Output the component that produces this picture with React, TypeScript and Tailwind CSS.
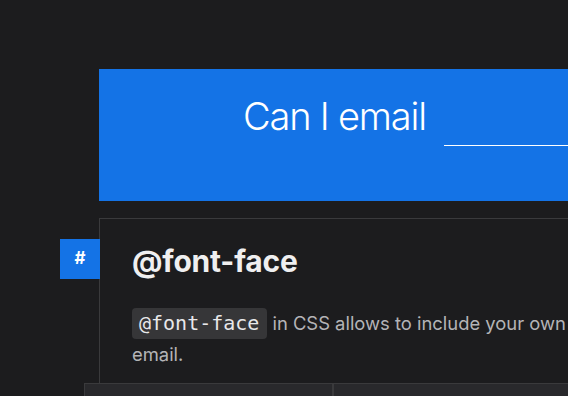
import React from "react";

export default function App() {
  return (
    <div
      className="w-[568px] h-[396px] overflow-hidden bg-[#1c1c1e]"
      style={{ fontFamily: "Inter, 'Noto Sans', sans-serif" }}
    >
      <div className="pt-[69px] pl-[99px]">
        {/* Banner */}
        <div className="w-[900px] h-[132px] bg-[#1473e6] flex items-start pl-[144px] pt-[23px]">
          <h1 className="text-white text-[38px] font-light leading-[48px] tracking-[-1.2px] whitespace-nowrap">
            Can I email
          </h1>
          <div className="ml-[18px] w-[400px] h-[54px] border-b border-white" />
        </div>
      </div>

      {/* Card */}
      <div className="relative ml-[99px] mt-[17px] w-[900px] border-l border-t border-[#3a3a3c]">
        <a className="absolute -left-[40px] top-[20px] w-[40px] h-[40px] bg-[#1473e6] flex items-center justify-center text-white text-[17px] font-bold">
          #
        </a>
        <div className="pl-[32px] pt-[22px]">
          <h2 className="text-[30px] font-bold leading-[40px] text-[#efeff0] tracking-[-0.2px]">
            @font-face
          </h2>
          <p className="mt-[27px] text-[18.4px] leading-[30px] text-[#b4b4b7] whitespace-nowrap">
            <code
              className="inline-block rounded-[4px] bg-[#363638] text-[#e8e8ea] text-[20px] leading-[31px] h-[31px] pl-[7px] pr-[8px] mr-[5px]"
              style={{ fontFamily: "'DejaVu Sans Mono', monospace" }}
            >
              @font-face
            </code>
            in CSS allows to include your own
            <br />
            email.
          </p>
        </div>
        <div className="-ml-[16px] mt-[14px] h-[40px] flex border-t border-l border-[#3a3a3c] bg-[#29292c]">
          <div className="w-[249px] border-r-2 border-[#3a3a3c]" />
          <div className="flex-1" />
        </div>
      </div>
    </div>
  );
}
